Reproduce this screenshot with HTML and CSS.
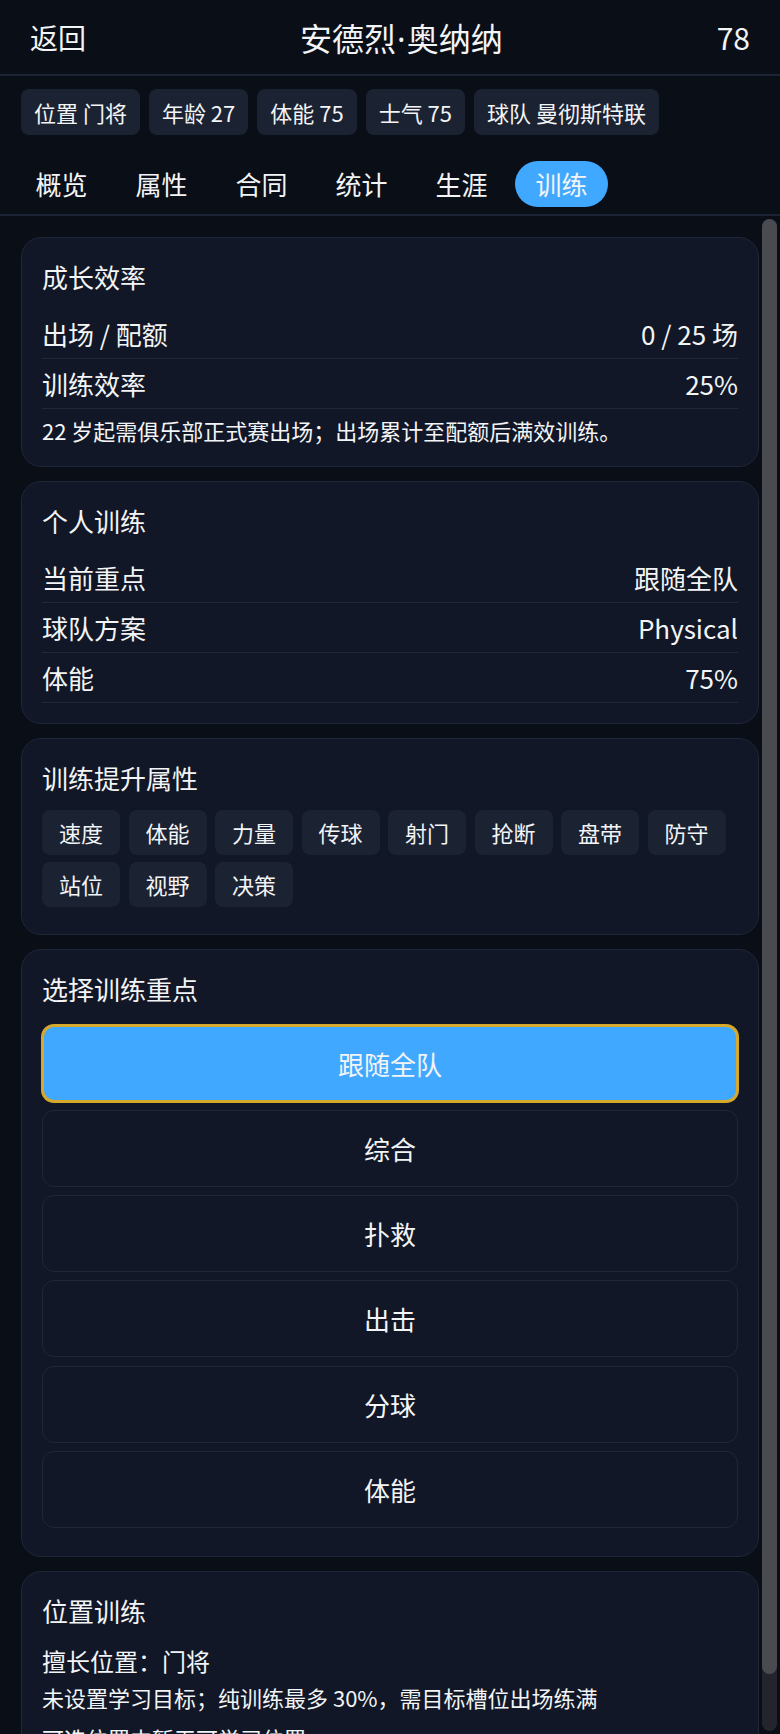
FILE: index.html
```html
<!DOCTYPE html>
<html lang="zh-CN">
<head>
    <meta charset="UTF-8">
    <meta name="viewport" content="width=device-width, initial-scale=1.0">
    <title>球员详情 - 训练</title>
    <link rel="stylesheet" href="styles.css">
</head>
<body>

    <div class="app">
        <div class="top-bar">
            <span class="back">返回</span>
            <span class="player-name">安德烈<span class="dot">·</span>奥纳纳</span>
            <span class="rating">78</span>
        </div>

        <div class="chips">
            <span class="chip">位置 门将</span>
            <span class="chip">年龄 27</span>
            <span class="chip">体能 75</span>
            <span class="chip">士气 75</span>
            <span class="chip">球队 曼彻斯特联</span>
        </div>

        <div class="tabs">
            <span class="tab">概览</span>
            <span class="tab">属性</span>
            <span class="tab">合同</span>
            <span class="tab">统计</span>
            <span class="tab">生涯</span>
            <span class="tab active">训练</span>
        </div>

        <div class="main">
            <div class="content">
                <div class="card">
                    <h3>成长效率</h3>
                    <div class="row"><span>出场 / 配额</span><span>0 / 25 场</span></div>
                    <div class="row"><span>训练效率</span><span>25%</span></div>
                    <p class="note">22 岁起需俱乐部正式赛出场；出场累计至配额后满效训练。</p>
                </div>

                <div class="card">
                    <h3>个人训练</h3>
                    <div class="row"><span>当前重点</span><span>跟随全队</span></div>
                    <div class="row"><span>球队方案</span><span>Physical</span></div>
                    <div class="row"><span>体能</span><span>75%</span></div>
                </div>

                <div class="card">
                    <h3>训练提升属性</h3>
                    <div class="tags">
                        <span class="tag">速度</span>
                        <span class="tag">体能</span>
                        <span class="tag">力量</span>
                        <span class="tag">传球</span>
                        <span class="tag">射门</span>
                        <span class="tag">抢断</span>
                        <span class="tag">盘带</span>
                        <span class="tag">防守</span>
                        <span class="tag">站位</span>
                        <span class="tag">视野</span>
                        <span class="tag">决策</span>
                    </div>
                </div>

                <div class="card">
                    <h3>选择训练重点</h3>
                    <div class="focus-list">
                        <button class="focus-btn selected">跟随全队</button>
                        <button class="focus-btn">综合</button>
                        <button class="focus-btn">扑救</button>
                        <button class="focus-btn">出击</button>
                        <button class="focus-btn">分球</button>
                        <button class="focus-btn">体能</button>
                    </div>
                </div>

                <div class="card">
                    <h3>位置训练</h3>
                    <p class="info">擅长位置：门将</p>
                    <p class="note">未设置学习目标；纯训练最多 30%，需目标槽位出场练满</p>
                    <p class="note extra">可选位置中暂无可学习位置</p>
                </div>
            </div>

            <!-- scrollbar drawn by hand, the screenshot browser hides native ones -->
            <div class="scrollbar">
                <div class="scroll-track">
                    <div class="scroll-thumb" style="height: 96.2%;"></div>
                </div>
            </div>
        </div>
    </div>

</body>
</html>
```

FILE: styles.css
```css
* {
    box-sizing: border-box;
}
body {
    margin: 0;
    background-color: #0a0e17;
    color: #f3f4f6;
    font-family: "Noto Sans CJK SC", "Noto Sans", sans-serif;
}
.app {
    display: flex;
    flex-direction: column;
    height: 100vh;
}
.top-bar {
    display: flex;
    justify-content: space-between;
    align-items: center;
    height: 76px;
    padding: 0 30px;
    border-bottom: 2px solid #1b2335;
}
.back {
    font-size: 28px;
}
.player-name {
    font-size: 32px;
}
.player-name .dot {
    font-family: "Noto Sans", sans-serif;
    padding: 0 1px;
}
.rating {
    font-size: 30px;
}
.chips {
    display: flex;
    gap: 9px;
    padding: 13px 21px;
}
.chip {
    height: 46px;
    line-height: 46px;
    padding: 0 13px;
    font-size: 22px;
    background-color: #1b2232;
    border-radius: 8px;
}
.tabs {
    display: flex;
    gap: 7px;
    padding: 13px 15px 7px;
    border-bottom: 2px solid #1b2335;
}
.tab {
    height: 46px;
    line-height: 46px;
    padding: 0 20.5px;
    font-size: 26px;
    border-radius: 23px;
}
.tab.active {
    background-color: #40a9ff;
}
.main {
    display: flex;
    flex: 1;
    min-height: 0;
}
.content {
    flex: 1;
    min-width: 0;
    overflow: hidden;
    padding: 21px 0 21px 21px;
}
.scrollbar {
    width: 21px;
    padding: 3px;
}
.scroll-track {
    height: 100%;
    background-color: #24252c;
    border-radius: 8px;
}
.scroll-thumb {
    background-color: #4a4b51;
    border-radius: 8px;
}
.card {
    background-color: #111726;
    border: 1px solid #1f2739;
    border-radius: 20px;
    padding: 20px;
    margin-bottom: 14px;
}
.card:last-child {
    margin-bottom: 0;
}
.card h3 {
    margin: 0 0 13px;
    font-size: 26px;
    line-height: 38px;
    font-weight: normal;
}
.row {
    display: flex;
    justify-content: space-between;
    padding: 7px 0;
    font-size: 26px;
    line-height: 35px;
    border-bottom: 1px solid #1f2739;
}
.note {
    margin: 6px 0 0;
    font-size: 22px;
    line-height: 31px;
}
.info {
    margin: 0;
    font-size: 24px;
    line-height: 36px;
}
.info + .note {
    margin-top: 3px;
}
.note.extra {
    margin-top: 10px;
}
.tags {
    display: flex;
    flex-wrap: wrap;
    gap: 6.5px 8.5px;
    margin-bottom: 7px;
}
.tag {
    height: 45px;
    line-height: 45px;
    padding: 0 17px;
    font-size: 22px;
    background-color: #1b2232;
    border-radius: 8px;
}
.focus-list {
    display: flex;
    flex-direction: column;
    gap: 8.3px;
    margin: 17px 0 8px;
}
.focus-btn {
    height: 77px;
    background-color: #111726;
    color: #f3f4f6;
    border: 1px solid #1f2739;
    border-radius: 12px;
    font-family: inherit;
    font-size: 26px;
    cursor: pointer;
}
.focus-btn.selected {
    background-color: #40a9ff;
    border: 2px solid #d6a82c;
    box-shadow: 0 0 0 1px #d6a82c;
}
```
